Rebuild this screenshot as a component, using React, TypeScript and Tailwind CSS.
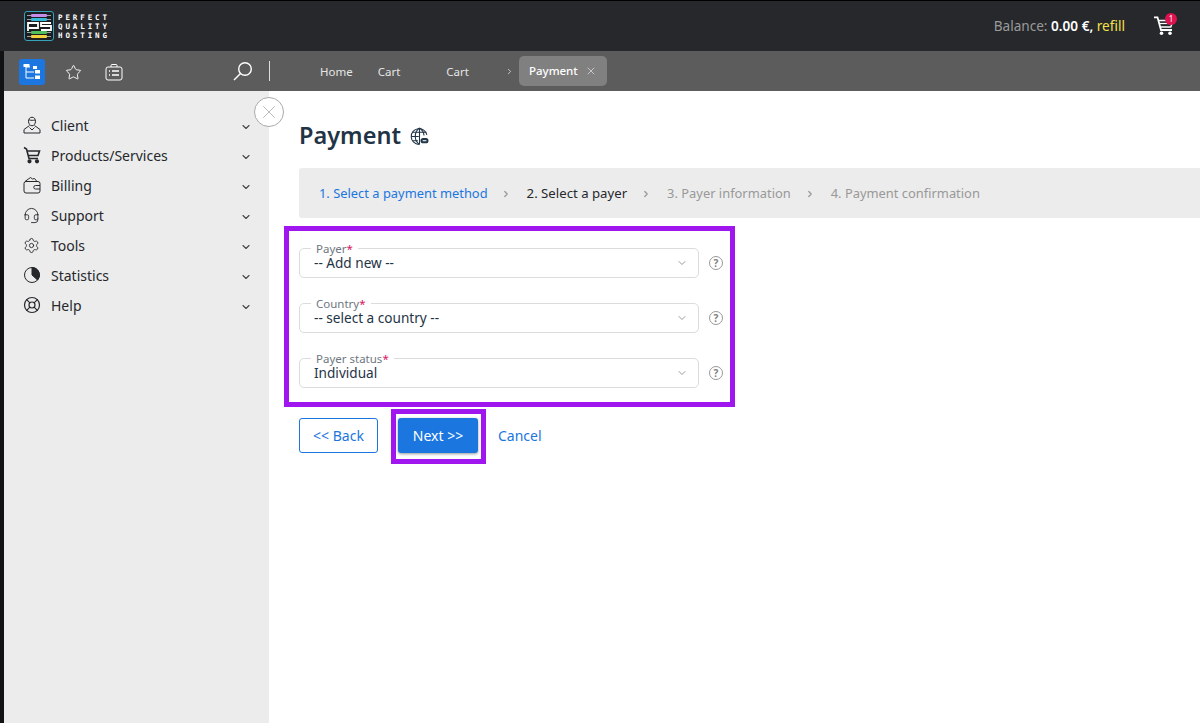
import React from 'react';
import { ChevronDown, ChevronRight, X, Star, Headset, Settings, LifeBuoy } from 'lucide-react';

const menuItems = [
  { label: 'Client', icon: <ClientIcon /> },
  { label: 'Products/Services', icon: <SideCartIcon /> },
  { label: 'Billing', icon: <WalletIcon /> },
  { label: 'Support', icon: <Headset className="w-[17px] h-[17px] text-[#26282c]" strokeWidth={1.25} /> },
  { label: 'Tools', icon: <Settings className="w-[17px] h-[17px] text-[#26282c]" strokeWidth={1.25} /> },
  { label: 'Statistics', icon: <PieIcon /> },
  { label: 'Help', icon: <LifeBuoy className="w-[18px] h-[18px] text-[#26282c]" strokeWidth={1.6} /> },
];

const fields = [
  { label: 'Payer', value: '-- Add new --' },
  { label: 'Country', value: '-- select a country --' },
  { label: 'Payer status', value: 'Individual' },
];

function ClientIcon() {
  return (
    <svg width="18" height="18" viewBox="0 0 18 18" fill="none" stroke="#26282c" strokeWidth="1">
      <path d="M5.5 5.2C5.5 2.8 7 1.2 9 1.2s3.5 1.6 3.5 4c0 2.6-1.6 4.6-3.5 4.6S5.5 7.8 5.5 5.2Z" />
      <path d="M6 3.8c2 .8 4.500 .6 6 .2" />
      <path d="M6.500 9.500 1 13.500V17h16v-3.500l-5.500-4" />
      <path d="M6.500 11.500 9 14l2.500-2.500" />
    </svg>
  );
}

function SideCartIcon() {
  return (
    <svg width="18" height="18" viewBox="0 0 18 18" fill="none" stroke="#26282c" strokeWidth="1.600">
      <path d="M1 1.500 3.500 3l2.500 9.500h9" />
      <path d="M4.300 5H16.500l-1.500 4.500H5.500" />
      <circle cx="6.500" cy="15.300" r="1.300" fill="#26282c" />
      <circle cx="14" cy="15.300" r="1.300" fill="#26282c" />
    </svg>
  );
}

function WalletIcon() {
  return (
    <svg width="18" height="18" viewBox="0 0 18 18" fill="none" stroke="#26282c" strokeWidth="1">
      <rect x="1" y="5.500" width="16" height="11.500" rx="2" />
      <path d="M2 5.500 7.500 1.500l2 1.500 2-.5 2.500 3" />
      <path d="M17 9.500h-4.500a1.500 1.500 0 0 0 0 3.500H17" />
    </svg>
  );
}

function PieIcon() {
  return (
    <svg width="18" height="18" viewBox="0 0 18 18" fill="none" stroke="#26282c" strokeWidth="1">
      <circle cx="9" cy="9" r="7.500" />
      <path d="M9 1.500A7.500 7.500 0 0 1 14.500 14L9 9Z" fill="#26282c" />
    </svg>
  );
}

function Logo() {
  return (
    <svg width="30" height="30" viewBox="0 0 30 30" fill="none">
      <rect x=".5" y=".5" width="29" height="29" rx="2.500" fill="#1c1e22" stroke="#35a3bb" />
      <path d="M3 4.500h24M3 8.500h24M3 21.500h24M3 25.500h24" stroke="#d8d8d8" strokeWidth=".7" />
      <rect x="7" y="3" width="16" height="3" rx="1" fill="#c48be8" />
      <rect x="7" y="7" width="16" height="3" rx="1" fill="#35b8d8" />
      <rect x="7" y="20" width="16" height="3" rx="1" fill="#4fbf5a" />
      <rect x="7" y="24" width="16" height="3" rx="1" fill="#f2d13c" />
      <path d="M4 20v-8h10v5H5M27 12H17v3h10v4H17" stroke="#fff" strokeWidth="1.800" />
    </svg>
  );
}

function TreeIcon() {
  return (
    <svg width="18" height="18" viewBox="0 0 18 18" fill="none">
      <path d="M3 4v11h8M3 9h8M7 4H3" stroke="#fff" strokeWidth="1" />
      <rect x="0.500" y="1" width="6" height="3" fill="#fff" />
      <rect x="10" y="3" width="4" height="3" fill="#fff" />
      <rect x="12" y="7" width="5" height="3.500" fill="#fff" />
      <rect x="12" y="12.500" width="5" height="3.500" fill="#fff" />
    </svg>
  );
}

function CaseIcon() {
  return (
    <svg width="18" height="18" viewBox="0 0 18 18" fill="none" stroke="#fff" strokeWidth="1">
      <rect x="1" y="4" width="16" height="13" rx="2" />
      <path d="M6 4V2.500A1 1 0 0 1 7 1.500h4a1 1 0 0 1 1 1V4" />
      <path d="M4 8h1M7 8h7M4 12h1M7 12h7" strokeWidth="1.300" />
    </svg>
  );
}

function SearchIcon() {
  return (
    <svg width="20" height="20" viewBox="0 0 20 20" fill="none" stroke="#fff" strokeWidth="1.400">
      <circle cx="12" cy="8" r="6.300" />
      <path d="M7.500 12.500 1 19" />
    </svg>
  );
}

function CartIcon() {
  return (
    <svg width="20" height="20" viewBox="0 0 20 20" fill="none" stroke="#fff">
      <path d="M0 1.300h3.500L7 14h11" strokeWidth="1.800" />
      <path d="M4.500 4.500H19l-2.200 6.500H6.200" strokeWidth="1.400" />
      <path d="M5 7.500h13" strokeWidth="1.200" />
      <circle cx="7.500" cy="17.300" r="1.800" fill="#fff" stroke="none" />
      <circle cx="16" cy="17.300" r="1.800" fill="#fff" stroke="none" />
    </svg>
  );
}

function GlobeIcon() {
  return (
    <svg width="19" height="19" viewBox="0 0 18 18" fill="none" stroke="#1f3446" strokeWidth="1">
      <path d="M16 7.500A7.500 7.500 0 1 0 8.500 16.500" />
      <path d="M9 1v15.500M1.300 9h7M2.500 5h13M2.500 13h5" />
      <path d="M9 1C6 3 5 6 5 9s1 5.500 4 7.500M9 1c3 2 4 4 4.300 7" />
      <rect x="10" y="10.500" width="7.500" height="5" rx="2.500" fill="#1f3446" stroke="none" />
      <path d="M12 13h3.500" stroke="#fff" />
    </svg>
  );
}

function HelpIcon() {
  return (
    <div className="w-[14px] h-[14px] rounded-full border border-[#999] flex items-center justify-center text-[10px] font-bold leading-none text-[#808080]">
      ?
    </div>
  );
}

function Field({ label, value }: { label: string; value: string }) {
  return (
    <div className="flex items-center">
      <div className="relative w-[400px] h-[30px] border border-[#dcdcdc] rounded-[5px] pl-[14px] flex items-center justify-between pr-[10px]">
        <span className="absolute left-[11px] top-[-6px] bg-white px-[5px] text-[11.5px] leading-[12px] text-[#6f7780]">
          {label}
          <span className="text-[#e0115f]">*</span>
        </span>
        <span className="text-[13.600px] leading-[14px] text-[#1f3446]">{value}</span>
        <ChevronDown className="w-[12px] h-[12px] text-[#9a9a9a]" />
      </div>
      <div className="ml-[10px]">
        <HelpIcon />
      </div>
    </div>
  );
}

export default function App() {
  return (
    <div className="w-[1200px] h-[723px] overflow-hidden flex flex-col bg-white font-['Noto_Sans',sans-serif]">
      <header className="h-[51px] shrink-0 bg-[#26282c] border-t border-black flex items-center pl-[24px]">
        <Logo />
        <div className="ml-[4px] text-[7.500px] leading-[9px] font-bold tracking-[2.900px] text-white font-['DejaVu_Sans_Mono',monospace]">
          <div>PERFECT</div>
          <div>QUALITY</div>
          <div>HOSTING</div>
        </div>
        <div className="ml-auto flex items-center">
          <div className="text-[13.600px] text-[#9a9a9a]">
            Balance: <span className="text-white font-semibold">0.00 €,</span>{' '}
            <span className="text-[#f5e14a]">refill</span>
          </div>
          <div className="relative ml-[29px] mr-[26px]">
            <CartIcon />
            <span className="absolute -top-[3px] left-[11px] w-[12px] h-[12px] rounded-full bg-[#e0114f] text-white text-[8px] leading-[12px] text-center">
              1
            </span>
          </div>
        </div>
      </header>

      <div className="flex flex-1 min-h-0 border-l-[4px] border-[#111214]">
        <div className="flex-1 min-w-0 flex flex-col">
          <nav className="h-[40px] shrink-0 bg-[#5c5c5c] flex items-center pl-[15px] pt-[2px] text-[11.500px] text-[#e6e6e6]">
            <div className="w-[26px] h-[26px] bg-[#1b76e0] rounded-[3px] flex items-center justify-center">
              <TreeIcon />
            </div>
            <Star className="w-[17px] h-[17px] ml-[20px] text-white" strokeWidth={1.300} />
            <div className="ml-[23px]">
              <CaseIcon />
            </div>
            <div className="ml-[110px] mb-[2px]">
              <SearchIcon />
            </div>
            <div className="w-px h-[20px] bg-[#ddd] ml-[16px] mb-[2px]" />
            <span className="ml-[50px]">Home</span>
            <span className="ml-[25px]">Cart</span>
            <span className="ml-[46px]">Cart</span>
            <ChevronRight className="w-[9px] h-[9px] ml-[36px] mb-[2px]" />
            <div className="ml-[5px] mb-[2px] h-[30px] w-[88px] rounded-[5px] bg-[#808080] flex items-center pl-[10px] text-white font-medium">
              Payment
              <X className="w-[12px] h-[12px] ml-[7px]" strokeWidth={1.100} />
            </div>
          </nav>

          <div className="flex flex-1 min-h-0 relative">
            <aside className="w-[265px] shrink-0 bg-[#ececec] pt-[19px] pl-[19px] pr-[17px]">
              {menuItems.map((item) => (
                <div key={item.label} className="h-[30px] flex items-center">
                  <div className="w-[28px] flex items-center">{item.icon}</div>
                  <span className="text-[14px] text-[#26282c]">{item.label}</span>
                  <ChevronDown className="ml-auto mt-[4px] w-[12px] h-[12px] text-[#444]" strokeWidth={2.200} />
                </div>
              ))}
            </aside>
            <div className="absolute left-[250px] top-[6px] w-[30px] h-[30px] rounded-full border border-[#aaa] bg-white flex items-center justify-center">
              <X className="w-[22px] h-[22px] text-[#aaa]" strokeWidth={0.900} />
            </div>

            <main className="flex-1 min-w-0 pl-[30px]">
              <div className="mt-[28px] h-[33px] flex items-center">
                <h1 className="text-[23.500px] leading-[33px] font-semibold text-[#1f3446]">Payment</h1>
                <div className="ml-[9px] mt-[1px]">
                  <GlobeIcon />
                </div>
              </div>

              <div className="mt-[16px] h-[50px] bg-[#ececec] rounded-l-[3px] flex items-center pl-[20px] pt-[2px] text-[12.900px]">
                <span className="text-[#1b76e0]">1. Select a payment method</span>
                <ChevronRight className="w-[10px] h-[10px] ml-[13px] mr-[16px] text-[#999]" strokeWidth={3} />
                <span className="text-[13.200px] text-[#26282c]">2. Select a payer</span>
                <ChevronRight className="w-[10px] h-[10px] ml-[14px] mr-[16px] text-[#999]" strokeWidth={3} />
                <span className="text-[#999]">3. Payer information</span>
                <ChevronRight className="w-[10px] h-[10px] ml-[14px] mr-[16px] text-[#999]" strokeWidth={3} />
                <span className="text-[#999]">4. Payment confirmation</span>
              </div>

              <div className="mt-[8px] -ml-[15px] w-[451px] h-[181px] border-[5px] border-[#a016ee] pt-[17px] pl-[10px] flex flex-col gap-[25px]">
                {fields.map((f) => (
                  <Field key={f.label} label={f.label} value={f.value} />
                ))}
              </div>

              <div className="flex items-center mt-[2px]">
                <button className="mb-[2px] w-[79px] h-[35px] border border-[#1b76e0] rounded-[3px] text-[14px] text-[#1b76e0]">
                  &lt;&lt; Back
                </button>
                <div className="ml-[13px] w-[95px] h-[55px] border-[5px] border-[#a016ee] flex items-center pl-[2px]">
                  <button className="mb-[2px] w-[80px] h-[35px] bg-[#1b76e0] rounded-[3px] shadow-[0_1px_3px_rgba(0,0,0,0.4)] text-[14px] text-white">
                    Next &gt;&gt;
                  </button>
                </div>
                <span className="ml-[12px] mb-[2px] text-[14px] text-[#1b76e0]">Cancel</span>
              </div>
            </main>
          </div>
        </div>
      </div>
    </div>
  );
}
